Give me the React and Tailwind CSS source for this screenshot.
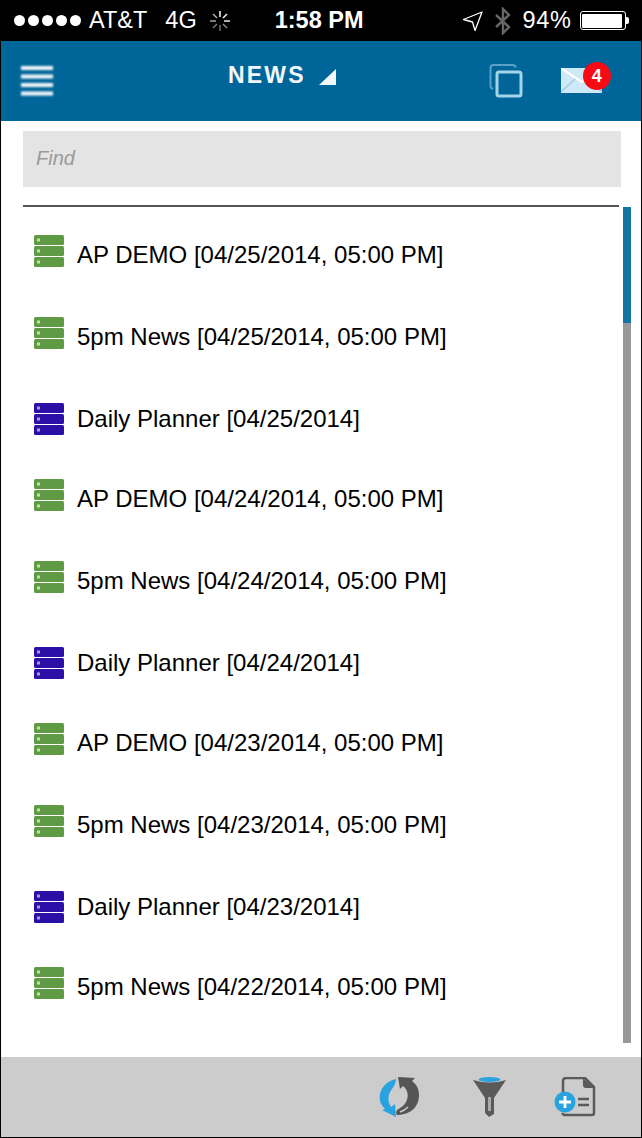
const rows = [
  ["g", "AP DEMO [04/25/2014, 05:00 PM]"],
  ["g", "5pm News [04/25/2014, 05:00 PM]"],
  ["b", "Daily Planner [04/25/2014]"],
  ["g", "AP DEMO [04/24/2014, 05:00 PM]"],
  ["g", "5pm News [04/24/2014, 05:00 PM]"],
  ["b", "Daily Planner [04/24/2014]"],
  ["g", "AP DEMO [04/23/2014, 05:00 PM]"],
  ["g", "5pm News [04/23/2014, 05:00 PM]"],
  ["b", "Daily Planner [04/23/2014]"],
  ["g", "5pm News [04/22/2014, 05:00 PM]"],
];

function Stack({ color, dot }) {
  return (
    <svg width="32" height="32" viewBox="0 0 32 32" className="shrink-0 blur-[0.5px]">
      {[0, 11, 22].map((y) => (
        <g key={y}>
          <rect x="1" y={y} width="30" height="10" rx="1.500" fill={color} />
          <rect x="4" y={y + 3.5} width="3" height="3" fill={dot} />
        </g>
      ))}
    </svg>
  );
}

function Row({ kind, text }) {
  const daily = kind === "b";
  return (
    <div className={daily ? "flex h-[80px] items-center pt-[2px] pl-[10px]" : "flex h-[82px] items-center pl-[10px]"}>
      <div className={daily ? "flex h-[32px] w-[44px] items-center" : "flex h-[32px] w-[44px] items-center -mt-[8px]"}>
        <Stack color={daily ? "#2c0fa6" : "#5f9a45"} dot={daily ? "#a79be0" : "#c6dcb8"} />
      </div>
      <span className="text-[24px] leading-[28px] text-black whitespace-nowrap">{text}</span>
    </div>
  );
}

export default function App() {
  return (
    <div className="flex h-[1138px] w-[642px] flex-col overflow-hidden border-r border-b border-l border-black bg-white font-['Liberation_Sans',Arial,sans-serif]">
      <div className="flex h-[41px] shrink-0 items-center -mx-px bg-black pl-[14px] text-[23.5px] text-white">
        <div className="flex gap-[3px]">
          {[0, 1, 2, 3, 4].map((i) => (
            <span key={i} className="h-[11px] w-[11px] rounded-full bg-white" />
          ))}
        </div>
        <span className="ml-[8px]">AT&amp;T</span>
        <span className="ml-[18px]">4G</span>
        <svg width="22" height="22" viewBox="0 0 22 22" className="ml-[12px]" stroke="#bbb" strokeWidth="1.6">
          <path d="M11 1v6" stroke="#eee" />
          <path d="M11 15v6" stroke="#666" />
          <path d="M1 11h6" stroke="#999" />
          <path d="M15 11h6" stroke="#ddd" />
          <path d="M4 4l4 4" stroke="#aaa" />
          <path d="M18 4l-4 4" stroke="#eee" />
          <path d="M4 18l4-4" stroke="#777" />
          <path d="M18 18l-4-4" stroke="#888" />
        </svg>
        <span className="ml-[44px] font-bold">1:58 PM</span>
        <svg width="22" height="22" viewBox="0 0 22 22" className="ml-[98px]" fill="none" stroke="#fff" strokeWidth="1.300">
          <path d="M1.500 9.500L20 2l-7 18.500-2.500-8.500z" strokeLinejoin="round" />
        </svg>
        <svg width="18" height="28" viewBox="0 0 18 26" className="ml-[10px]" fill="none" stroke="#666" strokeWidth="2.400">
          <path d="M2 7l13 12-6 6V1l6 6L2 19" />
        </svg>
        <span className="ml-[11px] tracking-[0.7px]">94%</span>
        <div className="ml-[8px] flex items-center">
          <div className="flex h-[19px] w-[46px] items-center rounded-[3px] border border-white p-[1.500px]">
            <div className="h-full w-[40px] rounded-[1px] bg-white" />
          </div>
          <div className="h-[7px] w-[3px] rounded-r-[2px] bg-white" />
        </div>
      </div>

      <div className="flex h-[80px] shrink-0 items-start bg-[#006699]">
        <svg width="32" height="30" viewBox="0 0 32 30" className="ml-[20px] mt-[25px] blur-[0.8px]">
          <rect y="0" width="32" height="4" fill="#f2f8fb" />
          <rect y="8.500" width="32" height="4" fill="#f2f8fb" />
          <rect y="17" width="32" height="4" fill="#f2f8fb" />
          <rect y="25.500" width="32" height="4" fill="#f2f8fb" />
        </svg>
        <span className="ml-[175px] mt-[20px] text-[23px] font-bold leading-[28px] tracking-[2.200px] text-[#f2f7fa]">NEWS</span>
        <svg width="17" height="17" viewBox="0 0 17 17" className="ml-[13px] mt-[28px]">
          <path d="M17 0v16H0z" fill="#f2f7fa" />
        </svg>
        <svg width="34" height="34" viewBox="0 0 34 34" className="ml-[153px] mt-[23px] blur-[0.4px]" fill="none">
          <path d="M27 3.500q-1-2.500-3.500-2.500h-19q-3 0-3 3v18q0 2 2.500 3" stroke="#5ba1c8" strokeWidth="2" />
          <rect x="8" y="8" width="24" height="24" rx="2" stroke="#a5d3ea" strokeWidth="3" />
        </svg>
        <div className="relative ml-[38px] mt-[27px] h-[25px] w-[41px]">
          <svg width="41" height="25" viewBox="0 0 41 25" className="blur-[0.3px]">
            <path d="M0 0h41v25H0z" fill="#cfe9f7" />
            <path d="M0 0l20.500 14L41 0" fill="none" stroke="#fff" strokeWidth="2.200" />
            <path d="M0 24l14-13M41 24L27 11" fill="none" stroke="#9fcbe3" strokeWidth="1.500" />
          </svg>
          <span className="absolute -top-[6px] left-[22px] flex h-[28px] w-[28px] items-center justify-center rounded-full bg-[#f60a14] text-[18px] font-bold text-white">4</span>
        </div>
      </div>

      <div className="flex min-h-0 flex-1 flex-col">
        <div className="ml-[22px] mt-[10px] flex h-[56px] w-[598px] shrink-0 items-center bg-[#e4e4e4] pb-[2px] pl-[13px] text-[20px] italic text-[#9a9a9a]">
          Find
        </div>
        <div className="flex min-h-0 flex-1">
          <div className="ml-[22px] w-[596px] shrink-0">
            <div className="mt-[18px] h-[2px] bg-[#555555]" />
            <div className="mt-[7px]">
              {rows.map(([k, t], i) => (
                <Row key={i} kind={k} text={t} />
              ))}
            </div>
          </div>
          <div className="ml-[4px] mt-[20px] flex h-[836px] w-[8px] flex-col bg-[#999999]">
            <div className="h-[116px] bg-[#1375a4]" />
          </div>
        </div>
        <div className="flex h-[80px] shrink-0 items-start bg-[#cccccc]">
          <svg width="40" height="40" viewBox="0 0 40 40" className="ml-[378px] mt-[20px] blur-[0.5px]">
            <path d="M17 2C6 4-1 14 1 24c1 3 3 6 5 8l-3 1 14 7-1-13-4 3c-4-6-3-13 1-18 2-3 4-6 4-10z" fill="#29a3e0" />
            <path d="M19 0l2 12 3-3c5 4 6 10 3 16-2 4-6 6-9 8-1 2-1 4 0 5 11 0 22-6 22-20 0-7-3-11-7-14l3-3z" fill="#555" />
            <path d="M21 35c3-1 6-3 8-5" stroke="#ccc" strokeWidth="1.500" fill="none" />
          </svg>
          <svg width="34" height="40" viewBox="0 0 34 40" className="ml-[54px] mt-[20px] blur-[0.6px]">
            <path d="M0 3q17 5 33 0L21 21v16l-5 3-4-4V21z" fill="#5a5a5a" />
            <ellipse cx="16.500" cy="2.500" rx="11" ry="2.500" fill="#29a3e0" />
            <path d="M15 20h3v14h-3z" fill="#aaa" />
          </svg>
          <svg width="42" height="40" viewBox="0 0 42 40" className="ml-[47px] mt-[20px] blur-[0.4px]">
            <path d="M9 16V4q0-3 3-3h19l9 9v26q0 2-2 2H11q-2 0-3-2" fill="none" stroke="#5a5a5a" strokeWidth="2.500" />
            <path d="M29 1v7q0 3 3 3h8z" fill="#5a5a5a" />
            <circle cx="11" cy="25" r="10.500" fill="#29a3e0" />
            <path d="M5 25h12M11 19v12" stroke="#fff" strokeWidth="2.800" />
            <path d="M24 22h11M24 28h11" stroke="#5a5a5a" strokeWidth="2.500" />
          </svg>
        </div>
      </div>
    </div>
  );
}
